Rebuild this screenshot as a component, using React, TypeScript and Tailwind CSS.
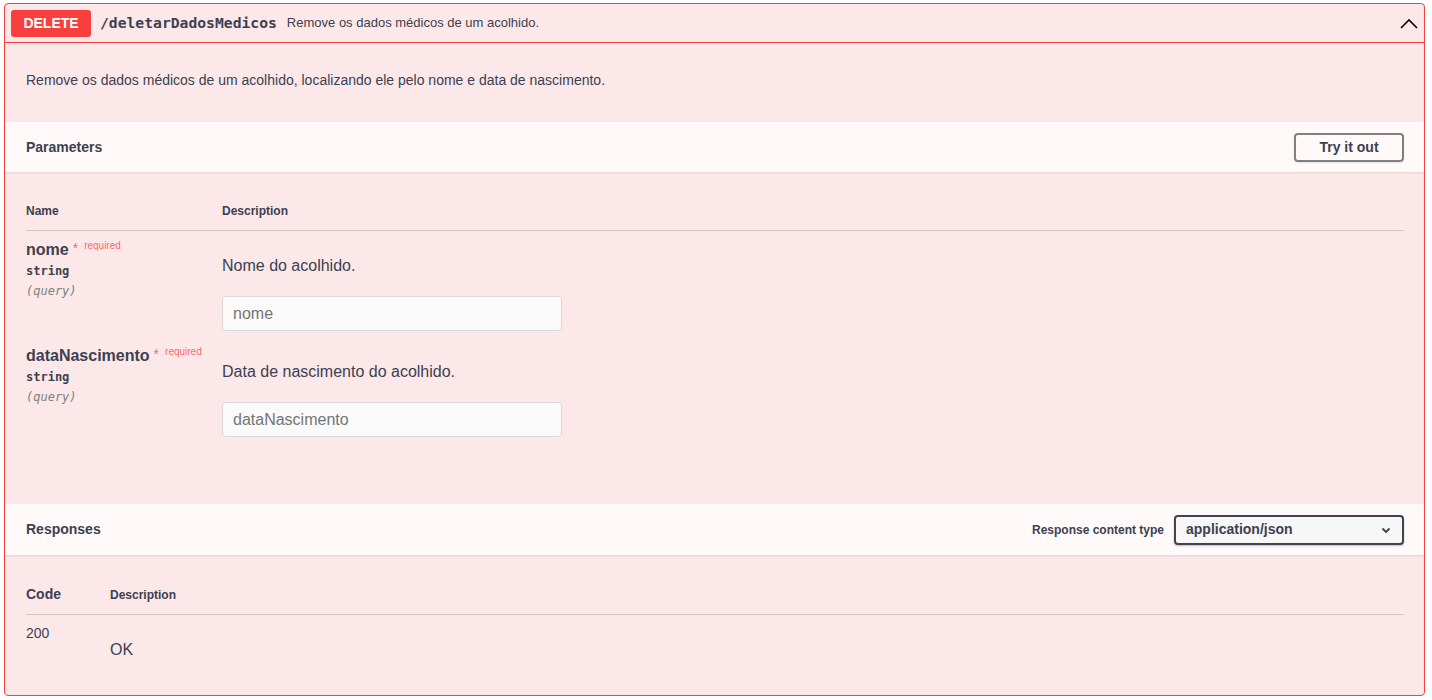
export default function App() {
  const params = [
    { name: 'nome', desc: 'Nome do acolhido.' },
    { name: 'dataNascimento', desc: 'Data de nascimento do acolhido.' },
  ];

  return (
    <div className="min-h-screen bg-white pt-[3px] text-[#3b4151]" style={{ fontFamily: '"Liberation Sans", Arial, sans-serif' }}>
      <div className="ml-[4px] w-[1421px] rounded-[4px] border border-[#f93e3e] bg-[#fce8e8] overflow-hidden">
        {/* summary */}
        <div className="flex h-[39px] items-center border-b border-[#f93e3e] pl-[6px] pr-[5px]">
          <span className="flex h-[27px] w-[80px] items-center justify-center rounded-[3px] bg-[#f93e3e] text-[14px] font-bold text-white">
            DELETE
          </span>
          <span className="ml-[9px] text-[14.7px] font-bold text-[#3b4151]" style={{ fontFamily: '"DejaVu Sans Mono", monospace' }}>
            /deletarDadosMedicos
          </span>
          <span className="ml-[10px] text-[13px] text-[#3b4151]">Remove os dados médicos de um acolhido.</span>
          <svg className="ml-auto" width="20" height="20" viewBox="0 0 20 20" fill="none">
            <polyline points="2,15 10,7 18,15" stroke="#000" strokeWidth="1.6" />
          </svg>
        </div>

        {/* description */}
        <div className="pl-[21px] pr-[20px] pt-[28px] pb-[33px]">
          <p className="text-[14px] leading-[18px]">
            Remove os dados médicos de um acolhido, localizando ele pelo nome e data de nascimento.
          </p>
        </div>

        {/* parameters header */}
        <div className="flex h-[50px] items-center justify-between bg-[#fffbfb]/90 pl-[21px] pr-[20px] shadow-[0_1px_2px_rgba(0,0,0,0.1)]">
          <h4 className="text-[14px] font-bold">Parameters</h4>
          <button className="h-[29px] w-[110px] rounded-[4px] border-2 border-[#808080] text-[14px] font-bold text-[#3b4151] shadow-[0_1px_2px_rgba(0,0,0,0.1)]">
            Try it out
          </button>
        </div>

        {/* parameters table */}
        <div className="pl-[21px] pr-[20px] pt-[20px] pb-[61px]">
          <div className="flex h-[39px] items-center border-b border-[#3b4151]/20 text-[12px] font-bold">
            <div className="w-[196px]">Name</div>
            <div>Description</div>
          </div>
          {params.map((p) => (
            <div key={p.name} className="flex h-[106px] pt-[11px]">
              <div className="w-[196px]">
                <div className="flex items-start">
                  <span className="text-[16px] font-bold leading-[16px]">{p.name}</span>
                  <span className="ml-[4px] text-[14px] leading-[12px] text-[rgba(255,0,0,0.6)]">*</span>
                  <span className="ml-[6px] -mt-[1px] text-[10px] leading-[10px] text-[rgba(255,0,0,0.6)]">required</span>
                </div>
                <div className="mt-[6px] text-[12px] font-bold leading-[14px]" style={{ fontFamily: '"DejaVu Sans Mono", monospace' }}>
                  string
                </div>
                <div className="mt-[6px] text-[12px] italic leading-[14px] text-[#808080]" style={{ fontFamily: '"DejaVu Sans Mono", monospace' }}>
                  (query)
                </div>
              </div>
              <div>
                <p className="mt-[15px] text-[16px] leading-[18px]">{p.desc}</p>
                <input
                  placeholder={p.name}
                  className="mt-[21px] h-[35px] w-[340px] rounded-[4px] border border-[#d9d9d9] bg-[#fafafa] px-[10px] text-[16px] outline-none placeholder:text-[#757575]"
                />
              </div>
            </div>
          ))}
        </div>

        {/* responses header */}
        <div className="flex h-[51px] items-center justify-between bg-[#fffbfb]/90 pl-[21px] pr-[20px] shadow-[0_1px_2px_rgba(0,0,0,0.1)]">
          <h4 className="text-[14px] font-bold">Responses</h4>
          <div className="flex items-center">
            <span className="text-[12px] font-bold">Response content type</span>
            <div className="ml-[10px] flex h-[30px] w-[230px] items-center justify-between rounded-[4px] border-2 border-[#41444e] bg-[#f7f7f7] px-[10px] shadow-[0_1px_2px_rgba(0,0,0,0.25)]">
              <span className="text-[14px] font-bold">application/json</span>
              <svg width="12" height="12" viewBox="0 0 12 12" fill="none">
                <polyline points="2.5,4.5 6,8 9.5,4.5" stroke="#3b4151" strokeWidth="1.8" />
              </svg>
            </div>
          </div>
        </div>

        {/* responses table */}
        <div className="pl-[21px] pr-[20px] pt-[20px] pb-[20px]">
          <div className="flex h-[40px] items-center border-b border-[#3b4151]/20">
            <div className="w-[84px] text-[14px] font-bold">Code</div>
            <div className="text-[12px] font-bold">Description</div>
          </div>
          <div className="flex h-[60px] pt-[10px]">
            <div className="w-[84px] text-[14px] leading-[16px]">200</div>
            <div className="pt-[16px] text-[16px] leading-[18px]">OK</div>
          </div>
        </div>
      </div>
    </div>
  );
}
